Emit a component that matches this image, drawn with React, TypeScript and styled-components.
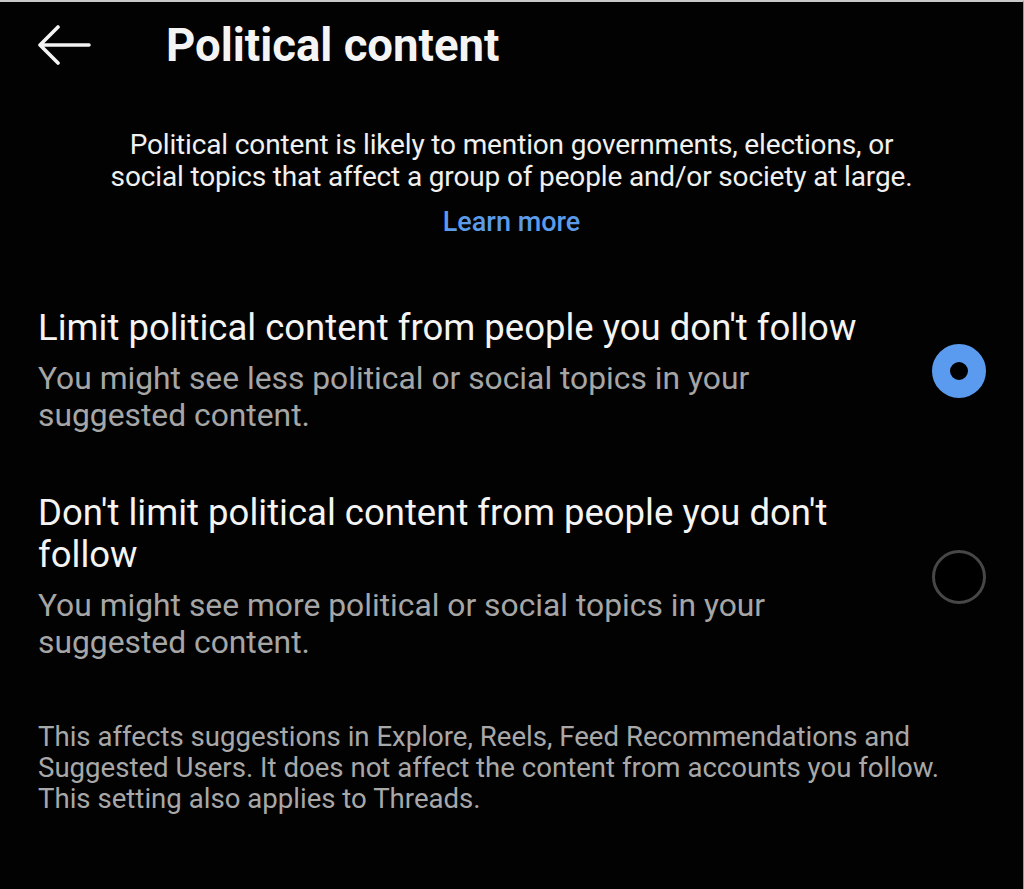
import styled, { createGlobalStyle } from 'styled-components';

const GlobalStyle = createGlobalStyle`
  html, body {
    margin: 0;
    padding: 0;
    background: #000;
  }
  body {
    font-family: Roboto, "Noto Sans", sans-serif;
    color: #f2f2f2;
  }
`;

const Screen = styled.div`
  width: 1024px;
  height: 889px;
  box-sizing: border-box;
  background: #020202;
  border-top: 2px solid #c8c8c8;
  border-right: 1px solid #9a9a9a;
  overflow: hidden;
`;

const TopBar = styled.div`
  display: flex;
  align-items: center;
  height: 86px;
  padding: 0 0 0 37px;
`;

const BackButton = styled.button`
  display: flex;
  align-items: center;
  justify-content: center;
  width: 54px;
  height: 40px;
  padding: 0;
  margin-right: 75px;
  background: none;
  border: none;
  color: #f4f4f4;
  cursor: pointer;
`;

const Title = styled.h1`
  margin: 0;
  font-size: 45.5px;
  font-weight: 700;
  color: #f4f4f4;
`;

const Intro = styled.div`
  display: flex;
  flex-direction: column;
  align-items: center;
  padding: 41px 30px 0;
  text-align: center;
`;

const IntroText = styled.p`
  margin: 0;
  font-size: 28px;
  line-height: 32px;
  letter-spacing: -0.15px;
  color: #f0f0f0;
`;

const LearnMore = styled.a`
  display: block;
  margin-top: 13px;
  font-size: 27px;
  line-height: 32px;
  font-weight: 500;
  color: #5b9bea;
  text-decoration: none;
`;

const Options = styled.div`
  display: flex;
  flex-direction: column;
  gap: 58px;
  padding: 69px 38px 0;
`;

const Option = styled.label`
  display: flex;
  align-items: center;
  justify-content: space-between;
  gap: 30px;
  cursor: pointer;
`;

const OptionText = styled.div`
  display: flex;
  flex-direction: column;
  max-width: 850px;
`;

const OptionTitle = styled.div`
  font-size: 36.5px;
  line-height: 42px;
  color: #f4f4f4;
`;

const OptionSub = styled.div`
  margin-top: 11px;
  font-size: 31.8px;
  line-height: 37px;
  color: #a6a6a6;
`;

const Radio = styled.span<{ $checked?: boolean }>`
  flex: none;
  width: 54px;
  height: 54px;
  margin-right: -1px;
  box-sizing: border-box;
  border-radius: 50%;
  border: ${(p) => (p.$checked ? '18px solid #5b9bef' : '3px solid #474747')};
  background: #000;
`;

const Footer = styled.p`
  margin: 0;
  padding: 60px 38px 0;
  font-size: 27.6px;
  line-height: 31px;
  color: #a8a8a8;
`;

export default function App() {
  return (
    <>
      <GlobalStyle />
      <Screen>
        <TopBar>
          <BackButton aria-label="Back">
            <svg width="54" height="40" viewBox="0 0 54 40" fill="none">
              <path
                d="M52 20H3M21 2L3 20l18 18"
                stroke="currentColor"
                strokeWidth="3.6"
                strokeLinecap="round"
                strokeLinejoin="round"
              />
            </svg>
          </BackButton>
          <Title>Political content</Title>
        </TopBar>

        <Intro>
          <IntroText>
            Political content is likely to mention governments, elections, or
            <br />
            social topics that affect a group of people and/or society at large.
          </IntroText>
          <LearnMore href="#">Learn more</LearnMore>
        </Intro>

        <Options>
          <Option>
            <OptionText>
              <OptionTitle>Limit political content from people you don't follow</OptionTitle>
              <OptionSub>
                You might see less political or social topics in your suggested content.
              </OptionSub>
            </OptionText>
            <Radio $checked />
          </Option>
          <Option>
            <OptionText>
              <OptionTitle>Don't limit political content from people you don't follow</OptionTitle>
              <OptionSub>
                You might see more political or social topics in your suggested content.
              </OptionSub>
            </OptionText>
            <Radio />
          </Option>
        </Options>

        <Footer>
          This affects suggestions in Explore, Reels, Feed Recommendations and
          <br />
          Suggested Users. It does not affect the content from accounts you follow.
          <br />
          This setting also applies to Threads.
        </Footer>
      </Screen>
    </>
  );
}
